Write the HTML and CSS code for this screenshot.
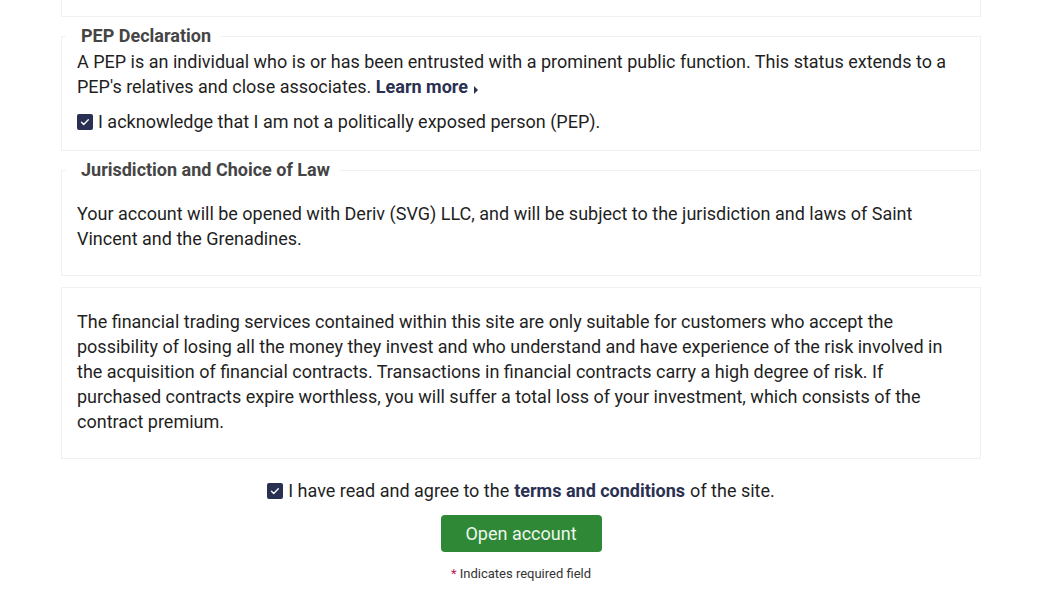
FILE: index.html
```html
<!DOCTYPE html>
<html lang="en">
<head>
    <meta charset="UTF-8">
    <meta name="viewport" content="width=device-width, initial-scale=1.0">
    <title>Open account</title>
    <link rel="stylesheet" href="styles.css">
</head>
<body>
<div id="form">
    <div class="box box-cut"></div>

    <fieldset class="group pep">
        <legend>PEP Declaration</legend>
        <p>A PEP is an individual who is or has been entrusted with a prominent public function. This status extends to a PEP's relatives and close associates. <a href="#" class="more">Learn more</a><span class="caret"></span></p>
        <label class="check">
            <span class="box-check"><svg viewBox="0 0 16 16" width="16" height="16"><path d="M4.5 8.3l2.2 2.2 4.6-4.8" fill="none" stroke="#fff" stroke-width="1.3" stroke-linecap="round" stroke-linejoin="round"/></svg></span>
            I acknowledge that I am not a politically exposed person (PEP).
        </label>
    </fieldset>

    <fieldset class="group law">
        <legend>Jurisdiction and Choice of Law</legend>
        <p>Your account will be opened with Deriv (SVG) LLC, and will be subject to the jurisdiction and laws of Saint Vincent and the Grenadines.</p>
    </fieldset>

    <div class="box risk">
        <p>The financial trading services contained within this site are only suitable for customers who accept the possibility of losing all the money they invest and who understand and have experience of the risk involved in the acquisition of financial contracts. Transactions in financial contracts carry a high degree of risk. If purchased contracts expire worthless, you will suffer a total loss of your investment, which consists of the contract premium.</p>
    </div>

    <div class="submit">
        <label class="check">
            <span class="box-check"><svg viewBox="0 0 16 16" width="16" height="16"><path d="M4.5 8.3l2.2 2.2 4.6-4.8" fill="none" stroke="#fff" stroke-width="1.3" stroke-linecap="round" stroke-linejoin="round"/></svg></span>
            I have read and agree to the <a href="#" class="terms">terms and conditions</a> of the site.
        </label>
        <button id="open-btn">Open account</button>
        <p class="hint"><span class="req">*</span> Indicates required field</p>
    </div>
</div>
</body>
</html>
```

FILE: styles.css
```css
body {
    margin: 0;
    font-family: Roboto, "Liberation Sans", sans-serif;
    color: #1f1f1f;
    background: #fff;
}

#form {
    width: 920px;
    margin-left: 61px;
    font-size: 18px;
    line-height: 25px;
}

p {
    margin: 0;
}

.box {
    border: 1px solid #f0f0f0;
    box-sizing: border-box;
}

.box-cut {
    border-top: none;
    height: 17px;
}

.group {
    margin: 0;
    border: 1px solid #f0f0f0;
    padding: 0 15px 16px 15px;
    min-width: 0;
}

.group legend {
    padding: 0 10px 0 15px;
    margin-left: -11px;
    font-weight: bold;
    color: #454545;
    line-height: 22px;
}

.pep {
    margin-top: 8px;
}

.pep p {
    margin-top: 2px;
}

.law {
    margin-top: 8px;
    padding-bottom: 24px;
}

.law p {
    margin-top: 20px;
}

.risk {
    margin-top: 11px;
    padding: 21px 15px 24px 15px;
}

a.more, a.terms {
    color: #2a3052;
    font-weight: bold;
    text-decoration: none;
}

.caret {
    display: inline-block;
    width: 0;
    height: 0;
    margin-left: 6px;
    border-left: 4px solid #2a3052;
    border-top: 4px solid transparent;
    border-bottom: 4px solid transparent;
    vertical-align: -1px;
}

.check {
    display: flex;
    align-items: center;
    gap: 5px;
}

.pep .check {
    margin-top: 10px;
}

.box-check {
    width: 16px;
    height: 16px;
    border-radius: 2px;
    background: #2a3052;
    flex: none;
    display: flex;
}

.submit {
    display: flex;
    flex-direction: column;
    align-items: center;
    padding-top: 19px;
}

#open-btn {
    margin-top: 12px;
    width: 161px;
    height: 37px;
    border: none;
    border-radius: 4px;
    background: #2e8836;
    color: #eef7ee;
    font-family: Roboto, "Liberation Sans", sans-serif;
    font-size: 18px;
    cursor: pointer;
}

.hint {
    margin-top: 13px;
    font-size: 13px;
    line-height: 18px;
    color: #333;
}

.req {
    color: #c2185b;
}
```
